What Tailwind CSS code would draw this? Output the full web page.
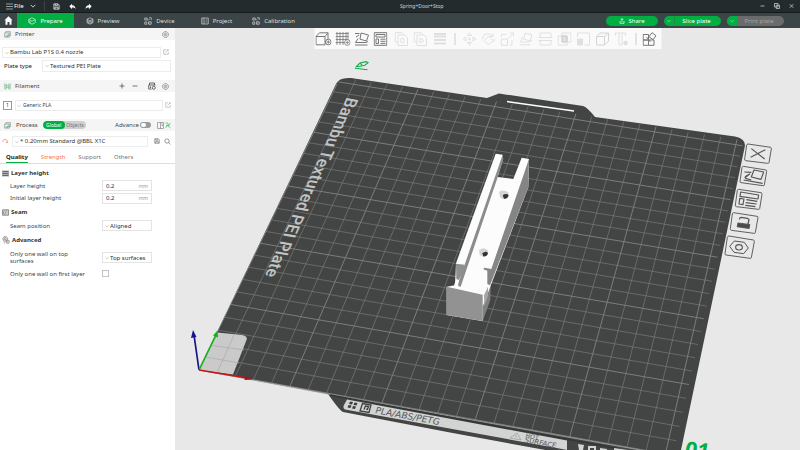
<!DOCTYPE html>
<html lang="en">
<head>
<meta charset="utf-8">
<title>Spring+Door+Stop</title>
<script src="https://cdn.jsdelivr.net/npm/@tailwindcss/browser@4"></script>
</head>
<body class="h-screen flex flex-col overflow-hidden bg-[#e8e8e8] text-[6px] leading-[8px] text-[#444] font-['Noto_Sans','Open_Sans',sans-serif]">
<svg class="hidden">
  <symbol id="chev" viewBox="0 0 8 8"><path d="M1 2.5 4 5.5 7 2.5" fill="none" stroke="currentColor"/></symbol>
  <symbol id="gear" viewBox="0 0 16 16"><g fill="none" stroke="currentColor" stroke-width="1.4"><path d="M5.5 1.5h5L12 3.8l2.5 1.4v5.6L12 12.2l-1.5 2.3h-5L4 12.200 1.500 10.800V5.200L4 3.800Z" stroke-linejoin="round"/><circle cx="8" cy="8" r="3"/><circle cx="8" cy="8" r=".6"/></g></symbol>
  <symbol id="edit" viewBox="0 0 16 16"><path d="M9 2H2v12h12V8M7 9l7-7M11 2h3v3" fill="none" stroke="currentColor" stroke-width="1.300"/></symbol>
  <symbol id="box" viewBox="0 0 16 16"><g fill="none" stroke="currentColor" stroke-width="1.300"><path d="M4 4V1.500h10.500V11H12M1.500 4.500H12V14H1.500Z"/><path d="M4 11.500h5.500V8" stroke="#00ae42" stroke-width="1.800"/></g></symbol>
  <symbol id="spool" viewBox="0 0 16 16"><g fill="none" stroke-width="1.300"><path d="M2 1.500v13M14 1.500v13" stroke="#777"/><path d="M5 1.500v13M11 1.500v13M5 5l6 2M5 9l6 2" stroke="#35b866"/></g></symbol>
  <symbol id="device" viewBox="0 0 16 16"><path d="M1.500 2h5v4h-5ZM10 1.500h4.500V6M11 4 8 7M1.500 10h4v4.500h-4ZM9 9.500h5.500v5H9ZM11.500 11v2" fill="none" stroke="currentColor" stroke-width="1.300"/></symbol>
  <symbol id="save" viewBox="0 0 16 16"><path d="M2 2h9.500L14 4.500V14H2ZM5 2v4h5V2M4.500 14V9.500h7V14" fill="none" stroke="currentColor" stroke-width="1.600"/></symbol>
  <symbol id="undo" viewBox="0 0 16 16"><path d="M7 1.500v3.700c5 .3 7.500 3.300 8 8.300-2-2.500-4-3.500-8-3.500v4L.8 7.700Z" fill="currentColor"/></symbol>
</svg>

<header class="shrink-0 text-white">
  <div class="h-[13px] flex items-center bg-[#232b2d] border-b border-[#151b1c]">
    <button class="flex items-center gap-px pl-[6px]" type="button"><svg class="w-[7px] h-[7px]" viewBox="0 0 7 7"><path d="M0 1h7M0 3.500h7M0 6h7" stroke="#ccc" stroke-width=".7"/></svg>File</button>
    <button class="ml-[6px] w-[6px]" type="button" aria-label="File menu"><svg class="w-[6px] h-[6px]"><use href="#chev"/></svg></button>
    <span class="ml-[8px] w-px h-[10px] bg-[#3c4446]"></span>
    <div class="flex gap-[9px] ml-[8px]">
      <button type="button" aria-label="Save"><svg class="w-[7px] h-[7px]"><use href="#save"/></svg></button>
      <button type="button" aria-label="Undo"><svg class="w-[7px] h-[7px]"><use href="#undo"/></svg></button>
      <button type="button" aria-label="Redo"><svg class="w-[7px] h-[7px] -scale-x-100"><use href="#undo"/></svg></button>
    </div>
    <h1 class="flex-1 pr-[8px] text-center text-[5px] text-[#d5d5d5]">Spring+Door+Stop</h1>
    <div class="flex gap-[9px] pr-[6px] text-[#c8c8c8]">
      <button type="button" aria-label="Minimize"><svg class="w-[5px] h-[6px]" viewBox="0 0 5 6"><path d="M.5 3h4" stroke="currentColor" stroke-width=".8"/></svg></button>
      <button type="button" aria-label="Restore"><svg class="w-[6px] h-[6px]" viewBox="0 0 6 6"><path d="M.5.500h3.500v3.500H.5ZM2.200 2.200h3.300v3.300H2.200Z" fill="none" stroke="currentColor" stroke-width=".8"/></svg></button>
      <button type="button" aria-label="Close"><svg class="w-[5px] h-[6px]" viewBox="0 0 5 6"><path d="m.8 1.200 3.500 3.600m0-3.600L.8 4.800" stroke="currentColor" stroke-width=".8"/></svg></button>
    </div>
  </div>
  <div class="h-[15px] flex items-center bg-[#3b4446]">
    <button class="w-[17px] flex justify-center" type="button" aria-label="Home"><svg class="w-[9px] h-[9px]" viewBox="0 0 9 9"><path d="M4.500.3.500 4.200h1V8.700h2V6h2v2.700h2V4.200h1Z" fill="#fff"/></svg></button>
    <nav class="flex h-full">
      <a href="#" class="w-[57px] flex items-center justify-center gap-[4px] bg-[#00ae42]"><svg class="w-[8px] h-[8px]" viewBox="0 0 16 16"><path d="M1.500 5 8 1.500 14.500 5v6L8 14.500 1.500 11ZM1.500 5 8 8.500 14.500 5M4 8v4" fill="none" stroke="#fff" stroke-width="1.200"/></svg>Prepare</a>
      <a href="#" class="w-[57px] flex items-center justify-center gap-[4px] text-[#dedede]"><svg class="w-[8px] h-[8px]" viewBox="0 0 16 16"><path d="m2 4.500 6-3 6 3v7l-6 3-6-3ZM2 4.500l6 3 6-3M2 7l6 3 6-3M2 9.500l6 3 6-3" fill="none" stroke="currentColor" stroke-width="1.200"/></svg>Preview</a>
      <a href="#" class="w-[57px] flex items-center justify-center gap-[4px] text-[#dedede]"><svg class="w-[8px] h-[8px]"><use href="#device"/></svg>Device</a>
      <a href="#" class="w-[57px] flex items-center justify-center gap-[4px] text-[#dedede]"><svg class="w-[8px] h-[8px]" viewBox="0 0 16 16"><path d="M1.500 2h13v12h-13ZM6 2v12M9 6h3.500M9 10h3.500M3 6h1M3 10h1" fill="none" stroke="currentColor" stroke-width="1.300"/></svg>Project</a>
      <a href="#" class="w-[57px] flex items-center justify-center gap-[4px] text-[#dedede]"><svg class="w-[8px] h-[8px]"><use href="#device"/></svg>Calibration</a>
    </nav>
    <div class="ml-auto mr-[16px] flex gap-[6px]">
      <button type="button" class="w-[52px] h-[10px] rounded-full bg-[#00ae42] flex items-center justify-center gap-[3px]"><svg class="w-[6px] h-[6px]" viewBox="0 0 12 12"><path d="M6 8V1M3.500 3.500 6 1l2.500 2.500M2 6v4.500h8V6" fill="none" stroke="#fff" stroke-width="1.400"/></svg>Share</button>
      <div class="w-[57px] h-[10px] rounded-full overflow-hidden bg-[#00ae42] flex">
        <button type="button" aria-label="Slice options" class="w-[11px] border-r border-[#238c4a] flex items-center justify-center"><svg class="w-[4px] h-[4px]"><use href="#chev"/></svg></button>
        <button type="button" class="flex-1 pr-[3px]">Slice plate</button>
      </div>
      <div class="w-[57px] h-[10px] rounded-full overflow-hidden bg-[#6b6b6b] flex">
        <button type="button" aria-label="Print options" class="w-[10px] bg-[#00ae42] flex items-center justify-center"><svg class="w-[4px] h-[4px]"><use href="#chev"/></svg></button>
        <button type="button" class="flex-1 pr-[3px] text-[#a3a3a3]" disabled>Print plate</button>
      </div>
    </div>
  </div>
</header>

<main class="flex-1 min-h-0 flex">
  <aside class="w-[175px] shrink-0 bg-white flex flex-col">
    <div class="h-[12px] px-[4px] flex items-center bg-[#f5f5f5]"><svg class="w-[7px] h-[7px] text-[#777]"><use href="#box"/></svg><h2 class="ml-[4px] flex-1">Printer</h2><button type="button" aria-label="Printer settings" class="mr-[2px]"><svg class="w-[7px] h-[7px] text-[#777]"><use href="#gear"/></svg></button></div>
    <div class="mt-[6px] h-[12px] pl-[2px] pr-[6px] flex items-center gap-[2px]">
      <div class="relative flex-1 flex"><select aria-label="Printer preset" class="appearance-none w-full h-[11px] pl-[7px] border border-[#ececec] text-[#333]"><option>Bambu Lab P1S 0.4 nozzle</option></select><svg class="absolute left-[3px] top-[4px] w-[4px] h-[4px] text-[#999]"><use href="#chev"/></svg></div>
      <button type="button" aria-label="Edit printer"><svg class="w-[6px] h-[6px] text-[#888]"><use href="#edit"/></svg></button>
    </div>
    <div class="mt-[2px] h-[12px] pl-[4px] pr-[4px] flex items-center">
      <label for="plate" class="w-[38px] text-[#222]">Plate type</label>
      <div class="relative flex-1 flex"><select id="plate" class="appearance-none w-full h-[12px] pl-[7px] border border-[#ececec] text-[#333]"><option>Textured PEI Plate</option></select><svg class="absolute left-[3px] top-[4px] w-[4px] h-[4px] text-[#999]"><use href="#chev"/></svg></div>
    </div>
    <div class="mt-[8px] h-[12px] px-[4px] flex items-center bg-[#f5f5f5]"><svg class="w-[7px] h-[7px]"><use href="#spool"/></svg><h2 class="ml-[4px] flex-1">Filament</h2>
      <div class="flex items-center gap-[7px] mr-[2px] text-[#555]">
        <button type="button" aria-label="Add filament"><svg class="w-[6px] h-[6px]" viewBox="0 0 6 6"><path d="M3 .5v5M.5 3h5" stroke="currentColor" stroke-width=".8"/></svg></button>
        <button type="button" aria-label="Remove filament"><svg class="w-[6px] h-[6px]" viewBox="0 0 6 6"><path d="M.5 3h5" stroke="currentColor" stroke-width=".8"/></svg></button>
        <button type="button" aria-label="Sync filaments" class="ml-[3px]"><svg class="w-[8px] h-[8px]" viewBox="0 0 16 16"><path d="M3 6V2h10v4M1.500 6H15M1.500 6v8H7M5 9v3" fill="none" stroke="currentColor" stroke-width="1.800"/><circle cx="11.500" cy="11.500" r="3" fill="none" stroke="currentColor" stroke-width="1.800"/></svg></button>
        <button type="button" aria-label="Filament settings" class="-ml-[1px]"><svg class="w-[7px] h-[7px] text-[#777]"><use href="#gear"/></svg></button>
      </div></div>
    <div class="mt-[7px] h-[12px] pl-[3px] pr-[4px] flex items-center">
      <span class="w-[9px] h-[9px] border border-[#999] text-center text-[5px] leading-[7px] text-[#333]">1</span>
      <div class="relative flex-1 flex ml-[3px]"><select aria-label="Filament preset" class="appearance-none w-full h-[11px] pl-[7px] border border-[#ececec] text-[5px] text-[#444]"><option>Generic PLA</option></select><svg class="absolute left-[2px] top-[4px] w-[4px] h-[4px] text-[#999]"><use href="#chev"/></svg></div>
      <button type="button" aria-label="Edit filament" class="ml-[2px]"><svg class="w-[6px] h-[6px] text-[#999]"><use href="#edit"/></svg></button>
    </div>
    <div class="mt-[8px] h-[12px] px-[4px] flex items-center bg-[#f5f5f5]"><svg class="w-[7px] h-[7px] text-[#777]"><use href="#box"/></svg><h2 class="ml-[5px]">Process</h2>
      <div class="ml-[5px] h-[8px] w-[43px] shrink-0 flex rounded-full overflow-hidden bg-[#cfcfcf] text-[5px] leading-[8px]"><button type="button" class="w-[22px] rounded-full bg-[#00ae42] text-white">Global</button><button type="button" class="flex-1 text-[#777]">Objects</button></div>
      <label for="adv" class="ml-auto">Advance</label>
      <span class="relative ml-px w-[11px] h-[6px]"><input id="adv" type="checkbox" class="appearance-none block w-[11px] h-[6px] rounded-full bg-[#9b9b9b]"><span class="pointer-events-none absolute left-[1px] top-[1px] w-[5px] h-[4px] rounded-full bg-white"></span></span>
      <button type="button" aria-label="Compare presets" class="ml-[6px]"><svg class="w-[14px] h-[7px]" viewBox="0 0 28 14"><path d="M1 1h12v12H1ZM7 1v12M9 4h3M9 7h3" fill="none" stroke="#777" stroke-width="1.200"/><path d="M17 2h4l2 4 4-4M17 12l4-5 6 5M18 7h7" fill="none" stroke="#35b866" stroke-width="1.400"/></svg></button></div>
    <div class="mt-[4px] h-[12px] pl-[2px] pr-[4px] flex items-center">
      <button type="button" aria-label="Reset preset"><svg class="w-[6px] h-[6px]" viewBox="0 0 12 12"><path d="M2 8a4.300 4.300 0 1 1 8 1M7.500 8l2.500 2 1.500-3" fill="none" stroke="#f2765a" stroke-width="1.400"/></svg></button>
      <div class="relative flex-1 flex ml-[4px]"><select aria-label="Process preset" class="appearance-none w-full h-[11px] pl-[7px] border border-[#ececec] text-[#333]"><option>* 0.20mm Standard @BBL X1C</option></select><svg class="absolute left-[3px] top-[4px] w-[4px] h-[4px] text-[#999]"><use href="#chev"/></svg></div>
      <button type="button" aria-label="Save preset" class="ml-[6px]"><svg class="w-[6px] h-[6px] text-[#666]"><use href="#save"/></svg></button>
      <button type="button" aria-label="Search settings" class="ml-[4px]"><svg class="w-[7px] h-[7px]" viewBox="0 0 14 14"><circle cx="6" cy="6" r="4.300" fill="none" stroke="#666" stroke-width="1.300"/><path d="m9 9 4 4" stroke="#666" stroke-width="1.300"/></svg></button>
    </div>
    <nav class="mt-[5px] h-[12px] pl-[6px] flex gap-[13px] border-b border-[#ddd] text-[#777]">
      <a href="#" class="h-[11px] leading-[11px] font-bold text-[#222] border-b border-[#00ae42]">Quality</a>
      <a href="#" class="leading-[11px] text-[#f2765a]">Strength</a>
      <a href="#" class="leading-[11px]">Support</a>
      <a href="#" class="leading-[11px]">Others</a>
    </nav>
    <h3 class="mt-[3px] h-[12px] pl-[2px] flex items-center gap-[2px] font-bold text-[#333]"><svg class="w-[7px] h-[7px]" viewBox="0 0 14 14"><path d="M1 3h12M1 7h12M1 11h12" stroke="#666" stroke-width="2.600"/><path d="M1 1v12M13 1v12" stroke="#777"/></svg>Layer height</h3>
    <div class="px-[10px] h-[13px] flex items-center"><label for="lh" class="w-[92px]">Layer height</label><span class="w-[50px] h-[11px] flex items-center border border-[#e4e4e4] px-[3px]"><input id="lh" value="0.2" class="w-[30px] text-[#333]"><span class="ml-auto text-[5px] text-[#999]">mm</span></span></div>
    <div class="px-[10px] h-[12px] flex items-center"><label for="ilh" class="w-[92px]">Initial layer height</label><span class="w-[50px] h-[11px] flex items-center border border-[#e4e4e4] px-[3px]"><input id="ilh" value="0.2" class="w-[30px] text-[#333]"><span class="ml-auto text-[5px] text-[#999]">mm</span></span></div>
    <h3 class="mt-[2px] h-[12px] pl-[2px] flex items-center gap-[2px] font-bold text-[#333]"><svg class="w-[7px] h-[7px]" viewBox="0 0 14 14"><path d="M1 1.500h12v11H1Z" fill="#ccc" stroke="#666" stroke-width="1.300"/><path d="M9 2 5 12M3 4v6" stroke="#777" fill="none"/></svg>Seam</h3>
    <div class="mt-[1px] px-[10px] h-[13px] flex items-center"><label for="seam" class="w-[92px]">Seam position</label><span class="relative flex w-[50px]"><select id="seam" class="appearance-none w-full h-[11px] pl-[7px] border border-[#e4e4e4] text-[#333]"><option>Aligned</option></select><svg class="absolute left-[3px] top-[4px] w-[4px] h-[4px] text-[#999]"><use href="#chev"/></svg></span></div>
    <h3 class="mt-[2px] h-[12px] pl-[2px] flex items-center gap-[2px] font-bold text-[#333]"><svg class="w-[8px] h-[8px]" viewBox="0 0 16 16"><g fill="none" stroke="#666" stroke-width="1.300"><path d="M4 1.500h5l2.500 4L9 10H4L1.500 5.500Z"/><circle cx="6.500" cy="5.500" r="2"/><circle cx="11.500" cy="11.500" r="3.300"/><path d="M11.500 10v3M3 12l3 2.500"/></g></svg>Advanced</h3>
    <div class="mt-[3px] px-[10px] h-[17px] flex items-center"><label for="onetop" class="w-[92px] pr-[20px] leading-[7px]">Only one wall on top surfaces</label><span class="relative flex w-[50px]"><select id="onetop" class="appearance-none w-full h-[11px] pl-[7px] border border-[#e4e4e4] text-[#333]"><option>Top surfaces</option></select><svg class="absolute left-[3px] top-[4px] w-[4px] h-[4px] text-[#999]"><use href="#chev"/></svg></span></div>
    <div class="mt-[1px] px-[10px] h-[13px] flex items-center"><label for="onefirst" class="w-[92px]">Only one wall on first layer</label><input id="onefirst" type="checkbox" class="appearance-none w-[7px] h-[7px] border border-[#c4c4c4]"></div>
  </aside>

  <section class="relative flex-1 min-w-0 bg-[#e8e8e8]" aria-label="Build plate view">
    <svg class="absolute inset-0 w-full h-full" viewBox="175 28 625 422" preserveAspectRatio="xMidYMid slice">
      <!-- plate body with rear tab and front lip -->
      <path d="M199 370 336 84Q339 77 351 78L487 98 499 93.500 583 106Q587 107 595 117L735 136.500Q747 139 744.500 148L681 450V460H600L450 432.500 343 412Q340 411 328 394Z" fill="#434544"/>
      <g id="grid" fill="none" stroke="#818382"></g>
      <path d="M507 101.500 574 111" stroke="#fff" stroke-width="1.500"/>
      <path d="M199 370 328 394 450 416 640 450" fill="none" stroke="#a5a6a5" stroke-width=".8"/>
      <path d="M199 370 217.500 332.500 242 335Q248 336 246.500 340L233 374.500Z" fill="#c9cac9"/>
      <path d="M212 345.500 244 350M206 357 239 363M234 335 217 373" stroke="#aaa" stroke-width=".7"/>
      <!-- front label strip -->
      <path d="M330 395 450 417.500 620 449" stroke="#343635" stroke-width="1.500" fill="none"/>
      <path d="M347 399.500 567 440.500V450L562 449 345 409.500Q342.500 408 344 405Z" fill="#d2d4d3"/>
      <g fill="#3e403f"><path d="m350 401.500 3 .5-1 2.500-3-.5ZM354.500 402.500l3 .5-1 2.500-3-.5ZM348.500 405l3 .5-1 2.500-3-.5ZM353 406l3 .5-1 2.500-3-.5Z"/></g>
      <path d="m362.500 403.500 8.500 1.500-2 7.500-9-1.500ZM364 409.500l1.500-3.500 3 .5-1 3-1.500-.5" fill="none" stroke="#3e403f" stroke-width="1.300"/>
      <g fill="#555" font-family="DejaVu Sans, sans-serif">
        <text transform="translate(374.500 413) skewY(10.500) skewX(-18)" font-size="9">PLA/ABS/PETG</text>
        <text transform="translate(525 437.500) skewY(10.500) skewX(-18)" font-size="6">HOT</text>
        <text transform="translate(524 442) skewY(10.500) skewX(-18)" font-size="7">SURFACE</text>
      </g>
      <path d="m510 438 7-5 4 7Zm6-3v2.500" fill="none" stroke="#999" stroke-width=".7"/>
      <path d="m578 444 6 1-1 5h-4ZM588 446h8v4h-8ZM600 448l7 1v2h-7ZM614 448l14 2v1h-14Z" fill="#d2d4d3"/>
      <path d="M590 448h4v3h-4Z" fill="#434544"/>
      <text transform="matrix(-.418 .908 -.98 -.17 347 97)" fill="#c3c5c4" font-size="17" font-weight="500" font-family="Roboto, Liberation Sans, sans-serif">Bambu Textured PEI Plate</text>
      <!-- axes -->
      <g stroke-width="1.700"><path d="M199 370 194 335" stroke="#14148c"/><path d="M199 370 216 335" stroke="#13b21a"/><path d="M199 370 247 378" stroke="#c41616"/></g>
      <path d="m193 330 3.500 7-5.500 1Z" fill="#14148c"/><path d="m217.500 330.500.5 7-5-2Z" fill="#13b21a"/><path d="m253 379.500-8.500.5.500-4Z" fill="#b01212"/>
      <!-- rename pencil -->
      <path d="m356.500 66.500 3.500-3.500 6-1.300 2 1-3 2.500-5 1ZM360 63l2 2M355 68.300l12.500 1.500" fill="none" stroke="#12ae4a" stroke-width="1.100"/>
      <text transform="translate(684 456) skewY(6) skewX(-10)" fill="#00ae42" font-size="21" font-weight="bold" font-family="Open Sans, sans-serif">01</text>
      <!-- printed part -->
      <g transform="translate(430 140) scale(.3333)">
        <path d="M197 41 218 44V60L203 111 250 117 275 53 297 57 295 142 182 437 158 543 50 525V440L75 436 78 370Z" fill="#fcfcfc"/>
        <path d="M218 44 220 58 203 112 92 440 82 437 104 374Z" fill="#8c8c8c"/>
        <path d="M78 371 104 374 102 392 86 420 79 417Z" fill="#8f8f8f"/>
        <path d="M297 57 295 142 180 436 172 432V392L160 388 163 383 184 387Z" fill="#858585"/>
        <path d="M50 440 158 464V543L50 525Z" fill="#929292"/>
        <path d="M158 543V500L182 437 181 480Z" fill="#808080"/>
        <path d="M162 466 174 440V468L163 498Z" fill="#a5a5a5"/>
        <path d="M72 436 78 420 86 421 84 440Z" fill="#fff"/>
        <path d="M207 155Q222 146 236 158L234 170Q222 184 210 171Z" fill="#d4d4d4"/><path d="M218 166Q228 158 236 165 233 178 222 176Z" fill="#333"/>
        <path d="M147 330Q162 318 175 332L173 345Q160 356 149 344Z" fill="#d4d4d4"/><path d="M157 340Q167 331 174 339 172 351 160 349Z" fill="#333"/>
      </g>
      <!-- plate tools -->
      <g transform="translate(690 120) scale(.3333)" fill="none" stroke="#555" stroke-width="3.500" stroke-linejoin="round">
        <g role="button" aria-label="Delete plate"><path d="M174 72 242 82Q245 83 244 87L237 128Q236 131 233 130L167 122Q163 121 164 117L170 75Q171 72 174 72Z" stroke-width="2.800"/><path d="M184 86 224 117M226 89 182 112"/></g>
        <g role="button" aria-label="Auto orient"><path d="M160 139 228 150Q231 151 230 154L223 195Q222 198 219 197L153 188Q149 187 150 184L156 142Q157 139 160 139Z" stroke-width="2.800"/><path d="M192 150 221 156 213 178 184 171ZM163 156 184 157M180 161 165 170M161 180 218 190M164 174 178 163M166 175 184 180"/></g>
        <g role="button" aria-label="Arrange plate"><path d="M146 208 213 218Q217 219 216 223L209 266Q208 269 205 268L139 260Q135 259 136 255L142 211Q143 208 146 208Z" stroke-width="2.800"/><path d="M152 216 206 225 204 237 150 229ZM149 235 162 237 159 254 147 252ZM169 239 202 244M167 248 200 252M166 256 196 260"/></g>
        <g role="button" aria-label="Lock plate"><path d="M131 278 201 289Q205 290 204 293L196 338Q195 341 192 340L124 331Q121 330 121 326L127 282Q128 278 131 278Z" stroke-width="2.800"/><path d="M144 309 179 314 177 325 142 320Z" fill="#484848"/><path d="M174 312 177 299Q176 296 172 295L153 292Q149 292 148 298" stroke-width="4"/></g>
        <g role="button" aria-label="Plate settings"><path d="M117 348 190 360Q194 361 193 365L184 413Q183 416 180 415L108 405Q104 404 105 401L112 352Q113 348 117 348Z" stroke-width="2.800"/><path d="M133 363 163 367 175 384 161 401 132 397 119 379Z" stroke-width="3"/><ellipse cx="147" cy="382" rx="10" ry="8"/></g>
      </g>
    </svg>

    <div role="toolbar" class="absolute top-0 left-1/2 -translate-x-1/2 h-[21px] pr-[2px] flex items-center bg-white/80 text-[#777]">
      <div class="flex">
        <button type="button" aria-label="Add model" class="w-[19px] flex justify-center"><svg class="w-[16px] h-[14px]" viewBox="0 0 16 14" fill="none" stroke="currentColor"><path d="M.5 4.500 4 .8h8.500L9.500 4.500ZM.5 4.500v8.300h9V4.500M12.500.8v6"/><circle cx="12.800" cy="10" r="2.800"/><path d="M12.800 8.500v3M11.300 10h3"/></svg></button>
        <button type="button" aria-label="Add plate" class="w-[19px] flex justify-center"><svg class="w-[15px] h-[14px]" viewBox="0 0 15 14" fill="none" stroke="currentColor" stroke-width=".8"><path d="M0 1.500h13M0 4.500h13M0 7.500h13M0 10.500h9M1.500 0v13M4.500 0v13M7.500 0v13M10.500 0v8M12.500 0v7"/><circle cx="11.800" cy="10.500" r="2.800" fill="#fafafa"/><path d="M11.800 9v3M10.300 10.500h3"/></svg></button>
        <button type="button" aria-label="Auto orient" class="w-[19px] flex justify-center"><svg class="w-[15px] h-[14px]" viewBox="0 0 15 14" fill="none" stroke="currentColor"><path d="m6.500 1 7.500 2-2 6-6.500-1.800ZM.5 1.500h4.500M4.500 3 1.500 5M3.500 6.500 1 10.500h10.500l2-1M.5 13h12.500"/></svg></button>
        <button type="button" aria-label="Arrange" class="w-[19px] flex justify-center"><svg class="w-[14px] h-[14px]" viewBox="0 0 14 14" fill="none" stroke="currentColor"><path d="M.7.700h12.600v12.600H.7ZM2.500 2.500h9v2.500h-9ZM2.500 7h2.500v4.500H2.500ZM7 7.200h5M7 9.300h5M7 11.400h5"/></svg></button>
      </div>
      <div class="flex ml-[2px] text-[#e0e0e0]">
        <button disabled aria-label="Copy" class="w-[19px] flex justify-center"><svg class="w-[14px] h-[14px]" viewBox="0 0 14 14" fill="none" stroke="currentColor"><path d="M3.500 10H.7V.7h7l2 2M3.500 3h7l2.500 2.500v8H3.500Z"/><ellipse cx="8" cy="8.500" rx="1.800" ry="2.500"/></svg></button>
        <button disabled aria-label="Paste" class="w-[19px] flex justify-center"><svg class="w-[14px] h-[14px]" viewBox="0 0 14 14" fill="none" stroke="currentColor"><path d="M3.500 10H.7V.7h7l2 2M3.500 3h7l2.500 2.500v8H3.500ZM6.500 6v5l4-2.500Z"/></svg></button>
        <button disabled aria-label="Layers" class="w-[19px] flex justify-center"><svg class="w-[13px] h-[14px]" viewBox="0 0 13 14" stroke="currentColor"><path d="M.5 2h12M.5 4.500h12M.5 8h12M.5 11.500h12" stroke-width="2"/></svg></button>
      </div>
      <span class="w-px h-[12px] mx-[5px] bg-[#ccc]"></span>
      <div class="flex text-[#e0e0e0]">
        <button disabled aria-label="Move" class="w-[19px] flex justify-center"><svg class="w-[14px] h-[14px]" viewBox="0 0 14 14" fill="none" stroke="currentColor"><path d="m7 .7 2 2.800H5ZM7 13.300l2-2.800H5ZM.7 7l2.800-2v4ZM13.300 7l-2.800-2v4ZM7 5.500v3M5.500 7h3"/></svg></button>
        <button disabled aria-label="Rotate" class="w-[19px] flex justify-center"><svg class="w-[14px] h-[14px]" viewBox="0 0 14 14" fill="none" stroke="currentColor"><path d="m7 4 4.500 4.500L7 13 2.500 8.500ZM1 7c0-4 4-6.500 8-4.500l2 1.500M11.500 1v3.500H8M13 7l-1 3"/></svg></button>
        <button disabled aria-label="Scale" class="w-[19px] flex justify-center"><svg class="w-[14px] h-[14px]" viewBox="0 0 14 14" fill="none" stroke="currentColor"><path d="M.7 7h6.300v6.300H.7ZM1 5V2.500h5M11.500 8v5H9M7.500 6.500 13 1M9.500 1H13v3.500"/></svg></button>
        <button disabled aria-label="Lay on face" class="w-[19px] flex justify-center"><svg class="w-[14px] h-[14px]" viewBox="0 0 14 14" fill="none" stroke="currentColor"><path d="m5.500 1 7 2-2 6-6.500-2ZM3 5 1 10h9l3-2M0 12.800h11"/></svg></button>
        <button disabled aria-label="Cut" class="w-[19px] flex justify-center"><svg class="w-[14px] h-[14px]" viewBox="0 0 14 14" fill="none" stroke="currentColor"><path d="M1.500 5V1h11v4M1.500 9v4h11V9M0 5.500h14M0 8.500h14"/></svg></button>
        <button disabled aria-label="Mesh boolean" class="w-[19px] flex justify-center"><svg class="w-[14px] h-[14px]" viewBox="0 0 14 14" fill="none" stroke="currentColor"><path d="M.7 4h9v9h-9ZM4.500 1h9v9h-9Z"/><path d="M4.500 4h5v6h-5Z" fill="currentColor" stroke="#ccc"/></svg></button>
        <button disabled aria-label="Support painting" class="w-[19px] flex justify-center"><svg class="w-[14px] h-[14px]" viewBox="0 0 14 14" fill="none" stroke="currentColor"><path d="M1 5V1h12v12H8"/><path d="M1 7h5v6H1Z" fill="currentColor"/></svg></button>
        <button disabled aria-label="Seam painting" class="w-[19px] flex justify-center"><svg class="w-[14px] h-[14px]" viewBox="0 0 14 14" fill="none" stroke="currentColor"><path d="M1 4.500 4.500 1H13v8l-4 4H1ZM1 4.500h8V13M9 4.500 13 1" stroke="#d4d4d4"/></svg></button>
        <button disabled aria-label="Text" class="w-[19px] flex justify-center"><svg class="w-[14px] h-[14px]" viewBox="0 0 14 14" fill="none" stroke="currentColor"><path d="M1 3.500V1h10v2.500M4.500 1v12h3V1"/><circle cx="11" cy="11" r="1.800" fill="currentColor"/></svg></button>
      </div>
      <span class="w-px h-[12px] mx-[4px] bg-[#ccc]"></span>
      <button type="button" aria-label="Assembly view" class="w-[19px] flex justify-center"><svg class="w-[14px] h-[14px]" viewBox="0 0 14 14" fill="none" stroke="currentColor"><path d="M.7 2.500H6V8H.7ZM.7 8H6v5.300H.7ZM6 8h5.500v5.300H6ZM9.500.700l4 3-3 4-4-3ZM4 5l4 5"/></svg></button>
    </div>
  </section>
</main>
<script>
// Projects bed millimetres onto the view plane and draws a line every 10 mm, heavier every 50 mm.
const A = [199, 370], B = [677, 456], C = [747, 140], D = [341, 76], SIZE = 256;
const sx = A[0] - B[0] + C[0] - D[0], sy = A[1] - B[1] + C[1] - D[1];
const ux = B[0] - C[0], uy = B[1] - C[1], vx = D[0] - C[0], vy = D[1] - C[1];
const det = ux * vy - uy * vx, g = (sx * vy - sy * vx) / det, h = (ux * sy - uy * sx) / det;
const project = (x, y) => {
  const u = x / SIZE, v = y / SIZE, w = g * u + h * v + 1;
  return [0, 1].map(i => ((B[i] - A[i] + g * B[i]) * u + (D[i] - A[i] + h * D[i]) * v + A[i]) / w);
};
let thin = '', thick = '';
for (let m = 0; m <= 250; m += 10) {
  const d = 'M' + project(m, m ? 0 : 8) + 'L' + project(m, m ? SIZE - 1 : 248) + 'M' + project(0, m) + 'L' + project(SIZE - 2, m);
  if (m % 50) thin += d; else thick += d;
}
document.getElementById('grid').innerHTML = `<path d="${thin}" stroke-width=".6"/><path d="${thick}" stroke-width=".9"/>`;
</script>
</body>
</html>
